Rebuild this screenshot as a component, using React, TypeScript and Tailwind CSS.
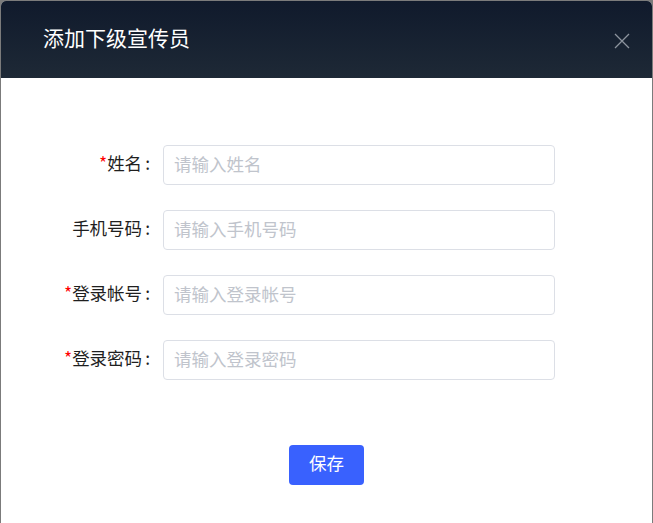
import React from "react";

const fields = [
  { label: "姓名", required: true, placeholder: "请输入姓名" },
  { label: "手机号码", required: false, placeholder: "请输入手机号码" },
  { label: "登录帐号", required: true, placeholder: "请输入登录帐号" },
  { label: "登录密码", required: true, placeholder: "请输入登录密码" },
];

export default function App() {
  return (
    <div
      className="w-[653px] h-[523px] bg-[#7b7b7b] px-px pt-px overflow-hidden"
      style={{ fontFamily: '"Microsoft YaHei", "Noto Sans CJK SC", sans-serif' }}
    >
      <div className="h-full bg-white rounded-t-[5px] overflow-hidden flex flex-col">
        {/* header */}
        <div className="h-[77px] shrink-0 bg-gradient-to-b from-[#101a2c] to-[#1e2936] flex items-center justify-between pl-[42px] pr-[22px] pb-[4px]">
          <span className="text-white text-[21px] leading-none">添加下级宣传员</span>
          <button aria-label="close" className="text-[#8d949e] mt-[6px]">
            <svg width="16" height="16" viewBox="0 0 16 16" fill="none" stroke="currentColor" strokeWidth="1.3">
              <path d="M1 1L15 15M15 1L1 15" />
            </svg>
          </button>
        </div>

        {/* form */}
        <div className="flex flex-col gap-[25px] pt-[67px]">
          {fields.map((f) => (
            <div key={f.label} className="flex items-center h-[40px]">
              <label className="w-[162px] pr-[13px] pb-[4px] text-right text-[17.5px] leading-none text-[#1f1f1f] whitespace-nowrap">
                {f.required && <span className="text-[#f00]">*</span>}
                {f.label}
                <span className="ml-[3px]">:</span>
              </label>
              <input
                placeholder={f.placeholder}
                className="w-[392px] h-[40px] border border-[#dcdfe6] rounded-[4px] px-[10px] pb-[4px] text-[17.5px] outline-none placeholder:text-[#c0c4cc]"
              />
            </div>
          ))}
        </div>

        <div className="flex justify-center pt-[65px]">
          <button className="w-[75px] h-[40px] rounded-[4px] bg-[#3961fe] text-white text-[17.5px] pb-[3px]">保存</button>
        </div>
      </div>
    </div>
  );
}
